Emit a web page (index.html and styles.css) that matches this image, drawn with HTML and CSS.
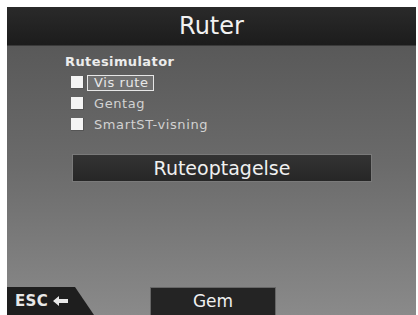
FILE: index.html
```html
<!DOCTYPE html>
<html>
<head>
<meta charset="utf-8">
<link rel="stylesheet" href="styles.css">
</head>
<body>
<div class="frame">
  <div class="screen">
    <div class="header">Ruter</div>
    <div class="body">
      <div class="group">
        <div class="group-title">Rutesimulator</div>
        <div class="row"><span class="box"></span><span class="label selected">Vis rute</span></div>
        <div class="row"><span class="box"></span><span class="label">Gentag</span></div>
        <div class="row"><span class="box"></span><span class="label">SmartST-visning</span></div>
      </div>
      <div class="wide-btn">Ruteoptagelse</div>
      <div class="spacer"></div>
      <div class="footer">
        <div class="esc">ESC<svg class="arrow" width="15" height="10" viewBox="0 0 15 10"><path d="M0 5 L6 0 L6 3 L15 3 L15 7 L6 7 L6 10 Z" fill="#e8e8e8"/></svg></div>
        <div class="gem">Gem</div>
      </div>
    </div>
  </div>
</div>
</body>
</html>
```
FILE: styles.css
```css
html, body {
  margin: 0;
  padding: 0;
  background: #ffffff;
  width: 418px;
  height: 315px;
  overflow: hidden;
}
.frame {
  padding: 7px 2px 0 7px;
  height: 308px;
}
.screen {
  height: 308px;
  display: flex;
  flex-direction: column;
  font-family: "DejaVu Sans", sans-serif;
}
.header {
  height: 38px;
  background: linear-gradient(#2a2a2a, #1c1c1c);
  color: #f2f2f2;
  font-size: 24px;
  line-height: 38px;
  text-align: center;
  border-bottom: 1px solid #3a3a3a;
}
.body {
  flex: 1;
  display: flex;
  flex-direction: column;
  background: linear-gradient(#595959, #6b6b6b 45%, #8a8a8a);
}
.group {
  padding: 8px 0 0 58px;
}
.group-title {
  color: #ececec;
  font-size: 13px;
  font-weight: bold;
  letter-spacing: 0.4px;
  line-height: 15px;
  margin-bottom: 3px;
}
.row {
  display: flex;
  align-items: center;
  height: 21px;
  padding-left: 6px;
}
.box {
  width: 13px;
  height: 13px;
  background: #f4f4f4;
  border-right: 1px solid #555;
  border-bottom: 1px solid #555;
  box-sizing: border-box;
}
.label {
  margin-left: 10px;
  color: #d2d2d2;
  font-size: 13px;
  letter-spacing: 0.6px;
  line-height: 14px;
}
.label.selected {
  margin-left: 3px;
  padding: 0 4px 0 6px;
  color: #e8e8e8;
  border: 1px solid #e6e6e6;
  background: #707070;
  line-height: 14px;
}
.wide-btn {
  margin: 19px 0 0 65px;
  width: 298px;
  height: 26px;
  background: linear-gradient(#333, #262626);
  border: 1px solid #7a7a7a;
  color: #f0f0f0;
  font-size: 19px;
  line-height: 26px;
  text-align: center;
}
.spacer {
  flex: 1;
}
.footer {
  display: flex;
  align-items: flex-end;
  height: 29px;
}
.esc {
  display: flex;
  align-items: center;
  gap: 5px;
  width: 80px;
  height: 28px;
  padding-left: 8px;
  background: #1e1e1e;
  clip-path: polygon(0 0, 68px 0, 87px 100%, 0 100%);
  color: #e8e8e8;
  font-size: 15px;
  font-weight: bold;
  letter-spacing: 0.3px;
  box-sizing: content-box;
}
.gem {
  margin-left: 55px;
  width: 126px;
  height: 28px;
  background: #242424;
  border: 1px solid #666;
  border-bottom: none;
  color: #f0f0f0;
  font-size: 17px;
  line-height: 26px;
  text-align: center;
  box-sizing: border-box;
}
```
